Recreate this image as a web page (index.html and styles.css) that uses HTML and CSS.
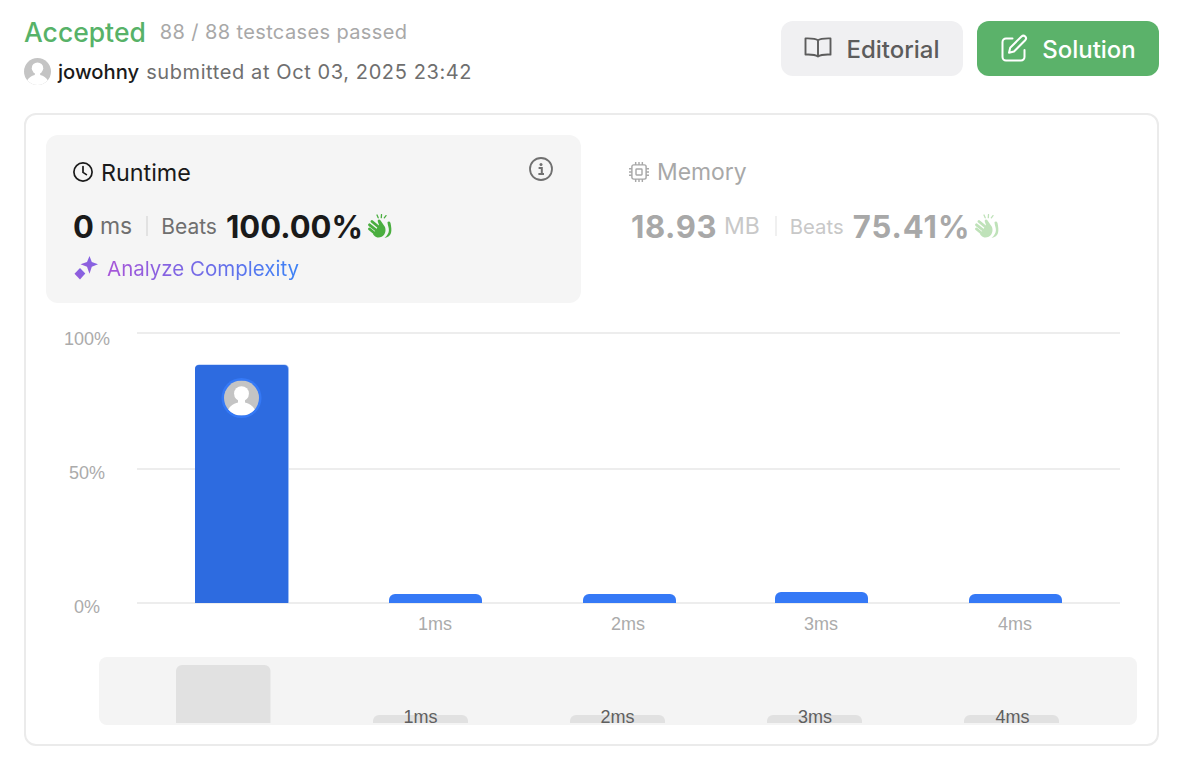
FILE: index.html
```html
<!DOCTYPE html>
<html lang="en">
<head>
<meta charset="utf-8">
<title>Submission result</title>
<link rel="stylesheet" href="styles.css">
</head>
<body>
<svg class="defs" width="0" height="0" aria-hidden="true">
  <defs>
    <symbol id="clap" viewBox="0 0 24 24">
      <path d="M1.500 15l5.500 4.500M1.500 10.800l6.500 5.200M4 7.500l6 5" class="clap-stroke"/>
      <path d="M6 19 11 11 9.800 7.500C9.200 5.500 11.500 4.800 12.600 6.500L17 13C19 19 15 24 9.500 23.500 7.500 23.300 6 21.500 5 20Z"/>
      <path d="M19.500 8c1-1 2.800-.5 3 1 .8 4 1.300 7 .5 10-.8 2.500-2.800 4.500-6.500 5 2.800-2.500 4.200-5 4.400-7.500.2-3-1.400-5.500-1.400-8.500Z"/>
      <path d="M9 1l1.200 2.800M13.500.6l-.2 3M18 1.600l-1.700 2.200" class="clap-tick"/>
    </symbol>
    <symbol id="avatar" viewBox="0 0 40 40">
      <circle cx="20" cy="20" r="20" fill="#c4c4c4"/>
      <circle cx="20" cy="15" r="8.500" fill="#fff"/>
      <path d="M16 21h8v4c5 1 9 4 11.200 8A20 20 0 0 1 20 40 20 20 0 0 1 4.800 33c2.200-4 6.200-7 11.200-8Z" fill="#fff"/>
    </symbol>
    <linearGradient id="spark" x1="0" y1="1" x2="1" y2="0">
      <stop offset="0" stop-color="#9b59d8"/>
      <stop offset="1" stop-color="#7c66e6"/>
    </linearGradient>
  </defs>
</svg>

<header class="top">
  <div class="status">
    <div class="status-row">
      <span class="accepted">Accepted</span>
      <span class="passed">88 / 88 testcases passed</span>
    </div>
    <div class="user-row">
      <svg class="user-avatar" viewBox="0 0 40 40"><use href="#avatar"/></svg>
      <span class="username">jowohny</span>
      <span class="submitted">submitted at Oct 03, 2025 23:42</span>
    </div>
  </div>
  <div class="actions">
    <button class="btn btn-gray" type="button">
      <svg class="btn-icon" viewBox="0 0 28 28" fill="none" stroke="currentColor" stroke-width="1.900" stroke-linejoin="round" stroke-linecap="round"><path d="M14 6.200C12 4.600 9 4.200 1.500 4.400v16.200c6.500-.3 10 .2 12.500 2 2.500-1.800 6-2.300 12.500-2V4.400C19 4.200 16 4.600 14 6.200Zm0 0v16.400"/></svg>
      <span>Editorial</span>
    </button>
    <button class="btn btn-green" type="button">
      <svg class="btn-icon" viewBox="0 0 28 28" fill="none" stroke="currentColor" stroke-width="2" stroke-linejoin="round" stroke-linecap="round"><path d="M12.500 4.500H6a3.500 3.500 0 0 0-3.500 3.500v15A3.500 3.500 0 0 0 6 26.500h15a3.500 3.500 0 0 0 3.500-3.500v-7"/><path d="M21.500 2.500a2.600 2.600 0 0 1 3.700 3.700L14 17.500l-5 1.200 1.200-5L21.500 2.500Z"/></svg>
      <span>Solution</span>
    </button>
  </div>
</header>

<main class="card">
  <section class="panels">
    <div class="panel panel-active">
      <div class="panel-head">
        <svg class="head-icon" viewBox="0 0 20 20" fill="none" stroke="#1a1a1a" stroke-width="1.700" stroke-linecap="round" stroke-linejoin="round"><circle cx="10" cy="10" r="9.100"/><path d="M10 4.600V10.400l3.400 2.200"/></svg>
        <span class="panel-title">Runtime</span>
        <svg class="info" viewBox="0 0 24 24" fill="none"><circle cx="12" cy="12" r="11" stroke="#707070" stroke-width="1.800"/><circle cx="12" cy="7.400" r="1.500" fill="#707070"/><path d="M9.600 11h3.200v5.600M9.400 17h5.600" stroke="#707070" stroke-width="2"/></svg>
      </div>
      <div class="metric">
        <span class="value">0</span>
        <span class="unit">ms</span>
        <span class="sep"></span>
        <span class="beats">Beats</span>
        <span class="pct">100.00%</span>
        <svg class="clap clap-on"><use href="#clap"/></svg>
      </div>
      <div class="analyze">
        <svg class="spark" viewBox="0 0 24 24" fill="url(#spark)"><path d="M15.500 0l2.300 6 6.200 2.200-6.200 2.500-2.300 7-2.500-7L6.500 8.200 13 6l2.500-6Z"/><path d="M6 12l5.300 5.500L6 23.500.5 17.800 6 12Z"/></svg>
        <span class="analyze-text">Analyze Complexity</span>
      </div>
    </div>
    <div class="panel panel-dim">
      <div class="panel-head">
        <svg class="head-icon" viewBox="1 1 18 18" fill="none" stroke="#a8a8a8" stroke-width="1.300"><rect x="3.600" y="3.600" width="12.800" height="12.800" rx="1.600"/><rect x="7.300" y="7.300" width="5.400" height="5.400" rx=".6"/><path d="M7 1v2.600M10 1v2.600M13 1v2.600M7 16.400V19M10 16.400V19M13 16.400V19M1 7h2.600M1 10h2.600M1 13h2.600M16.400 7H19M16.400 10H19M16.400 13H19"/></svg>
        <span class="panel-title">Memory</span>
      </div>
      <div class="metric">
        <span class="value">18.93</span>
        <span class="unit">MB</span>
        <span class="sep"></span>
        <span class="beats">Beats</span>
        <span class="pct">75.41%</span>
        <svg class="clap clap-off"><use href="#clap"/></svg>
      </div>
    </div>
  </section>

  <svg class="chart" viewBox="26 303 1131 441" role="img" aria-label="Runtime distribution">
    <g class="grid">
      <rect x="137" y="332" width="983" height="2"/>
      <rect x="137" y="468" width="983" height="2"/>
      <rect x="137" y="602" width="983" height="2"/>
    </g>
    <g class="axis">
      <text x="64" y="345">100%</text>
      <text x="69" y="479">50%</text>
      <text x="74" y="613">0%</text>
    </g>
    <path class="bar-edge" d="M195 603V369a4.500 4.500 0 0 1 4.500-4.500h85a4.500 4.500 0 0 1 4.500 4.500v234Z"/>
    <path class="bar-selected" d="M195 603V369a4 4 0 0 1 4-4h85a4 4 0 0 1 4 4v234Z"/>
    <path class="bar" d="M389 603v-3a6 6 0 0 1 6-6h81a6 6 0 0 1 6 6v3Z"/>
    <path class="bar" d="M583 603v-3a6 6 0 0 1 6-6h81a6 6 0 0 1 6 6v3Z"/>
    <path class="bar" d="M775 603v-5a6 6 0 0 1 6-6h81a6 6 0 0 1 6 6v5Z"/>
    <path class="bar" d="M969 603v-3a6 6 0 0 1 6-6h81a6 6 0 0 1 6 6v3Z"/>
    <circle class="ring" cx="241.500" cy="398" r="20"/>
    <use href="#avatar" x="224" y="380.500" width="35" height="35"/>
    <g class="axis axis-mid">
      <text x="435" y="630">1ms</text>
      <text x="628" y="630">2ms</text>
      <text x="821" y="630">3ms</text>
      <text x="1015" y="630">4ms</text>
    </g>
    <rect class="brush" x="99" y="657" width="1038" height="68" rx="8"/>
    <path class="mini" d="M176 723V671a6 6 0 0 1 6-6h82.500a6 6 0 0 1 6 6v52Z"/>
    <path class="mini" d="M373 723v-2a6 6 0 0 1 6-6h83a6 6 0 0 1 6 6v2Z"/>
    <path class="mini" d="M570 723v-2a6 6 0 0 1 6-6h83a6 6 0 0 1 6 6v2Z"/>
    <path class="mini" d="M767 723v-2a6 6 0 0 1 6-6h83a6 6 0 0 1 6 6v2Z"/>
    <path class="mini" d="M964 723v-2a6 6 0 0 1 6-6h83a6 6 0 0 1 6 6v2Z"/>
    <g class="axis-mini">
      <text x="420.500" y="723">1ms</text>
      <text x="617.500" y="723">2ms</text>
      <text x="815" y="723">3ms</text>
      <text x="1012.500" y="723">4ms</text>
    </g>
  </svg>
</main>
</body>
</html>
```
FILE: styles.css
```css
* { box-sizing: border-box; }
html, body { margin: 0; height: 100%; background: #fff; }
body {
  padding: 21px 41px 0 24px;
  font-family: Inter, "Liberation Sans", sans-serif;
  color: #1a1a1a;
  overflow: hidden;
}
.defs { position: absolute; }

.top { display: flex; justify-content: space-between; height: 55px; }
.status { display: flex; flex-direction: column; }
.status-row { display: flex; align-items: center; height: 24px; margin-top: -1px; gap: 14px; }
.accepted { font-size: 26.500px; font-weight: 500; color: #57b268; }
.passed { font-size: 20px; color: #a8a8a8; letter-spacing: .38px; }
.user-row { display: flex; align-items: center; margin-top: 14px; height: 27px; }
.user-avatar { width: 27px; height: 27px; margin-right: 7px; }
.username { font-size: 20.200px; font-weight: 500; color: #1a1a1a; margin-right: 7px; }
.submitted { font-size: 20px; color: #6f6f6f; letter-spacing: .6px; }

.actions { display: flex; gap: 14px; }
.btn {
  display: flex; align-items: center; justify-content: center; gap: 14px;
  height: 55px; border: 0; border-radius: 12px; padding: 1px 0 0;
  font: 500 24px Inter, "Liberation Sans", sans-serif;
}
.btn-gray { width: 182px; background: #f0f0f2; color: #5c5c5c; }
.btn-green { width: 182px; background: #5bb26a; color: #fff; }
.btn-icon { width: 28px; height: 28px; flex: none; margin-top: -2px; }

.card {
  margin-top: 37px; width: 1135px; height: 633px;
  border: 2px solid #ebebeb; border-radius: 12px;
}
.panels { display: flex; padding: 20px 20px 0; height: 188px; }
.panel { height: 168px; border-radius: 12px; }
.panel-active { width: 535px; padding: 0 28px 0 27px; background: #f5f5f5; }
.panel-dim { padding: 0 0 0 48px; }
.panel-head { display: flex; align-items: center; height: 24px; margin-top: 25px; }
.head-icon { width: 20px; height: 20px; flex: none; margin-right: 8px; }
.panel-title { font-size: 23.300px; }
.panel-dim .panel-title { font-size: 22.900px; color: #a8a8a8; }
.info { width: 24px; height: 24px; margin-left: auto; margin-top: -6px; }

.metric { display: flex; align-items: center; height: 36px; margin-top: 24px; }
.value { font-size: 31px; font-weight: 700; color: #1a1a1a; }
.unit { font-size: 23px; color: #6f6f6f; margin-left: 6px; }
.sep { width: 2px; height: 20px; background: #e2e2e2; margin: 0 13px 0 14px; }
.beats { font-size: 21px; color: #6f6f6f; }
.pct { font-size: 31px; font-weight: 700; margin-left: 9px; }
.clap { width: 24px; height: 24px; margin-left: 5px; stroke-linecap: round; }
.clap-on { color: #4aae3f; fill: #4aae3f; }
.clap-off { color: #bfe2b9; fill: #bfe2b9; }
.clap-stroke { fill: none; stroke: currentColor; stroke-width: 2.800; }
.clap-tick { fill: none; stroke: currentColor; stroke-width: 1.300; }
.panel-dim .metric { margin-left: 2px; }
.panel-dim .value { letter-spacing: .6px; }
.panel-dim .unit { margin-left: 7px; }
.panel-dim .pct { letter-spacing: 1px; }
.panel-dim .beats { font-size: 20.300px; }
.panel-dim .sep { margin: 0 13px 0 15px; background: #f0f0f0; }
.panel-dim .value, .panel-dim .pct { color: #a8a8a8; }
.panel-dim .unit, .panel-dim .beats { color: #c8c8c8; }

.analyze { display: flex; align-items: center; margin-top: 11px; height: 26px; }
.spark { width: 24px; height: 24px; margin-left: 1px; margin-right: 9px; flex: none; }
.analyze-text {
  font-size: 20.500px;
  background: linear-gradient(90deg, #a855d8, #3b82f6);
  -webkit-background-clip: text; background-clip: text;
  color: transparent;
}

.chart { display: block; width: 1131px; height: 441px; }
.grid rect { fill: #ededed; }
.axis text, .axis-mini text { font: 18px "Liberation Sans", Arial, sans-serif; }
.axis text { fill: #ababab; }
.axis-mid text, .axis-mini text { text-anchor: middle; }
.axis-mini text { fill: #5f5f5f; }
.bar { fill: #3579f6; }
.bar-selected { fill: #2d6be0; }
.bar-edge { fill: #9dbdf5; }
.ring { fill: #3579f6; }
.brush { fill: #f4f4f4; }
.mini { fill: #e1e1e1; }
```
